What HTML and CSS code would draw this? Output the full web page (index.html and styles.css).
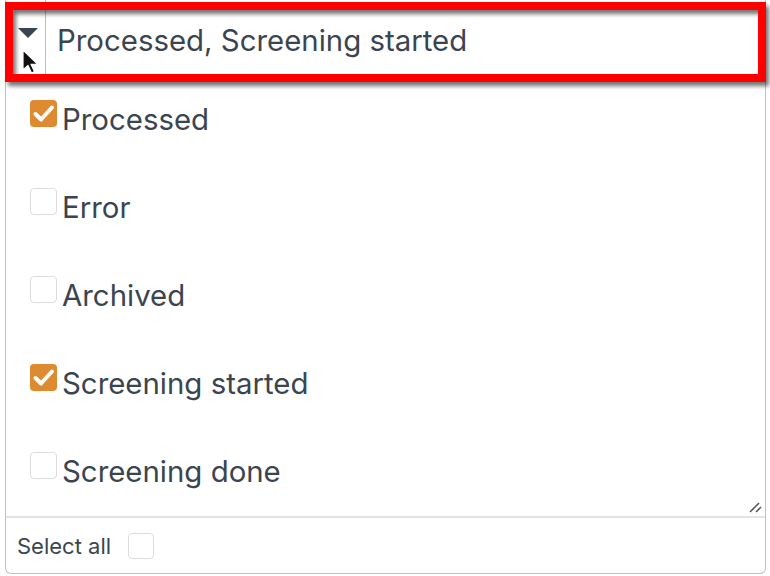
FILE: index.html
```html
<!DOCTYPE html>
<html>
<head>
<meta charset="utf-8">
<link rel="stylesheet" href="styles.css">
</head>
<body>
<div class="select">
  <div class="header">
    <div class="toggle">
      <svg class="caret" width="20" height="10" viewBox="0 0 20 10"><path d="M0 0 L20 0 L10 10 Z" fill="#3b4550"/></svg>
      <svg class="cursor" width="18" height="26" viewBox="0 0 18 26"><path d="M1 1 L1 21 L6 16.5 L9.5 24 L12.5 22.6 L9 15.3 L15.5 15 Z" fill="#111" stroke="#fff" stroke-width="1.2" stroke-linejoin="round"/></svg>
    </div>
    <div class="value">Processed, Screening started</div>
  </div>
  <div class="list">
    <div class="item"><span class="box checked"><svg width="27" height="27" viewBox="0 0 27 27"><path d="M5.5 14 L11 19.5 L22 7.5" fill="none" stroke="#fff" stroke-width="4" stroke-linecap="round" stroke-linejoin="round"/></svg></span><span class="label">Processed</span></div>
    <div class="item"><span class="box"></span><span class="label">Error</span></div>
    <div class="item"><span class="box"></span><span class="label">Archived</span></div>
    <div class="item"><span class="box checked"><svg width="27" height="27" viewBox="0 0 27 27"><path d="M5.5 14 L11 19.5 L22 7.5" fill="none" stroke="#fff" stroke-width="4" stroke-linecap="round" stroke-linejoin="round"/></svg></span><span class="label">Screening started</span></div>
    <div class="item"><span class="box"></span><span class="label">Screening done</span></div>
    <svg class="grip" width="14" height="12" viewBox="0 0 14 12"><path d="M2 11 L11 2 M8 11 L13 6" stroke="#555" stroke-width="1.5" fill="none"/></svg>
  </div>
  <div class="footer">
    <span class="footer-label">Select all</span>
    <span class="box small"></span>
  </div>
</div>
<div class="highlight"></div>
</body>
</html>
```

FILE: styles.css
```css
html, body {
  margin: 0;
  padding: 0;
  background: #ffffff;
}
body {
  font-family: "Inter", "Lato", sans-serif;
  color: #3b4550;
  width: 770px;
  height: 576px;
  overflow: hidden;
  position: relative;
}
.select {
  margin-left: 5px;
  width: 759px;
  height: 573px;
  border: 1.5px solid #c2c2c2;
  border-top: none;
  border-radius: 0 0 6px 6px;
  display: flex;
  flex-direction: column;
  background: #fff;
}
.header {
  height: 82px;
  display: flex;
  flex-shrink: 0;
}
.toggle {
  width: 39px;
  border-right: 1.5px solid #bdbdbd;
  position: relative;
  flex-shrink: 0;
}
.caret {
  position: absolute;
  left: 12px;
  top: 28px;
}
.cursor {
  position: absolute;
  left: 16px;
  top: 49px;
}
.value {
  padding-left: 11px;
  padding-top: 23px;
  font-size: 29.4px;
  line-height: 36px;
  white-space: nowrap;
}
.list {
  flex: 1;
  position: relative;
  overflow: hidden;
  padding-top: 18px;
}
.item {
  height: 88px;
  display: flex;
  align-items: flex-start;
  padding-left: 24px;
}
.box {
  width: 25px;
  height: 25px;
  border: 1px solid #dcdcdc;
  border-radius: 4px;
  flex-shrink: 0;
  margin-top: 0;
  background: #fff;
}
.box.checked {
  width: 27px;
  height: 27px;
  border: none;
  background: #de8a30;
}
.box svg {
  display: block;
}
.label {
  font-size: 29.4px;
  line-height: 36px;
  margin-left: 5px;
  margin-top: 2px;
  white-space: nowrap;
}
.grip {
  position: absolute;
  right: 3px;
  bottom: 3px;
}
.footer {
  height: 55px;
  border-top: 2px solid #e3e3e3;
  flex-shrink: 0;
  display: flex;
  align-items: center;
  padding-left: 11px;
}
.footer-label {
  font-size: 22px;
}
.box.small {
  width: 24px;
  height: 24px;
  margin-left: 17px;
}
.highlight {
  position: absolute;
  left: 5px;
  top: 2px;
  width: 745px;
  height: 64px;
  border: 8px solid #ff0000;
  filter: drop-shadow(3px 4px 2px rgba(0,0,0,0.55));
}
```
